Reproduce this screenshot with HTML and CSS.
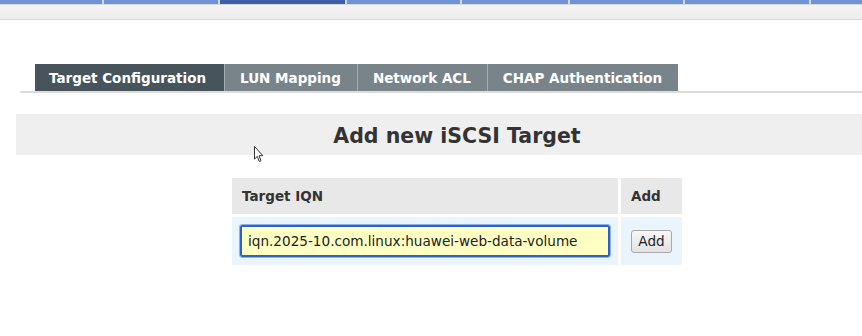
FILE: index.html
```html
<!DOCTYPE html>
<html lang="en">
<head>
    <meta charset="UTF-8">
    <title>iSCSI Targets</title>
    <link rel="stylesheet" href="styles.css">
</head>
<body>
    <div class="topnav">
        <div class="nav-item" style="width:102px"></div>
        <div class="nav-item" style="width:114px"></div>
        <div class="nav-item active" style="width:125px"></div>
        <div class="nav-item" style="width:113px"></div>
        <div class="nav-item" style="width:106px"></div>
        <div class="nav-item" style="width:113px"></div>
        <div class="nav-item" style="width:124px"></div>
        <div class="nav-item" style="width:60px"></div>
    </div>
    <div class="subbar"></div>

    <div class="tabs">
        <a href="#" class="tab active">Target Configuration</a>
        <a href="#" class="tab">LUN Mapping</a>
        <a href="#" class="tab">Network ACL</a>
        <a href="#" class="tab">CHAP Authentication</a>
    </div>

    <div class="content">
        <h2 class="section-title">Add new iSCSI Target</h2>
        <table class="form-table">
            <tr>
                <th class="col-iqn">Target IQN</th>
                <th class="col-add">Add</th>
            </tr>
            <tr>
                <td><input type="text" class="iqn-input" value="iqn.2025-10.com.linux:huawei-web-data-volume"></td>
                <td class="col-add btn-cell"><button class="add-btn">Add</button></td>
            </tr>
        </table>
        <!-- mouse pointer from the screenshot -->
        <svg class="pointer" width="10" height="17" viewBox="0 0 10 17">
            <path d="M0.5 0.5 L0.5 13 L3.3 10.4 L5.3 15.5 L7 14.8 L5 9.8 L8.8 9.6 Z" fill="#fff" stroke="#333" stroke-width="1"/>
        </svg>
    </div>
</body>
</html>
```

FILE: styles.css
```css
body {
    margin: 0;
    font-family: "DejaVu Sans", Verdana, sans-serif;
    background: #fff;
    color: #333;
    overflow: hidden;
}
.topnav {
    display: flex;
    gap: 2px;
    height: 4px;
    background: #d4d7dc;
    padding-bottom: 1px;
}
.nav-item {
    flex: none;
    background: #6f93d4;
}
.nav-item.active {
    background: #3d5fa6;
}
.subbar {
    height: 14px;
    background: linear-gradient(#f4f4f4, #ececec);
    border-bottom: 1px solid #d9d9d9;
}
.tabs {
    display: flex;
    margin: 44px 0 0 20px;
    padding-left: 15px;
    border-bottom: 2px solid #dcdcdc;
}
.tab {
    display: block;
    height: 27px;
    line-height: 28px;
    padding: 0 16px 0 15px;
    background: #78848a;
    color: #fff;
    font-size: 13.5px;
    font-weight: bold;
    text-decoration: none;
    border-left: 1px solid #a3acb0;
}
.tab.active {
    background: #48545b;
    border-left: none;
    padding-left: 14px;
    padding-right: 18px;
}
.content {
    position: relative;
    width: 882px;
    margin: 21px 0 0 16px;
}
.section-title {
    margin: 0;
    height: 41px;
    line-height: 44px;
    background: #efefef;
    text-align: center;
    font-size: 20.5px;
    color: #333;
}
.form-table {
    margin: 20px auto 0;
    border-spacing: 3px;
    width: 456px;
}
.form-table th {
    height: 36px;
    padding: 0 10px;
    background: #e8e8e8;
    text-align: left;
    font-size: 13.5px;
}
.form-table td {
    height: 48px;
    padding: 0 8px;
    background: #eaf4fd;
}
.col-add {
    width: 41px;
}
.form-table td.btn-cell {
    padding: 0;
    text-align: center;
}
.iqn-input {
    box-sizing: border-box;
    width: 370px;
    height: 32px;
    padding: 0 6px;
    font-family: "DejaVu Sans", Verdana, sans-serif;
    font-size: 13.6px;
    color: #222;
    background: #ffffc4;
    border: 2px solid #2c63c4;
    border-radius: 2px;
    outline: 1px solid #8fb0e8;
}
.add-btn {
    height: 23px;
    padding: 0 6px;
    font-family: "DejaVu Sans", Verdana, sans-serif;
    font-size: 13.6px;
    color: #222;
    background: linear-gradient(#f7f7f7, #e2e2e2);
    border: 1px solid #a8a8a8;
    border-radius: 3px;
}
.pointer {
    position: absolute;
    left: 238px;
    top: 32px;
}
```
